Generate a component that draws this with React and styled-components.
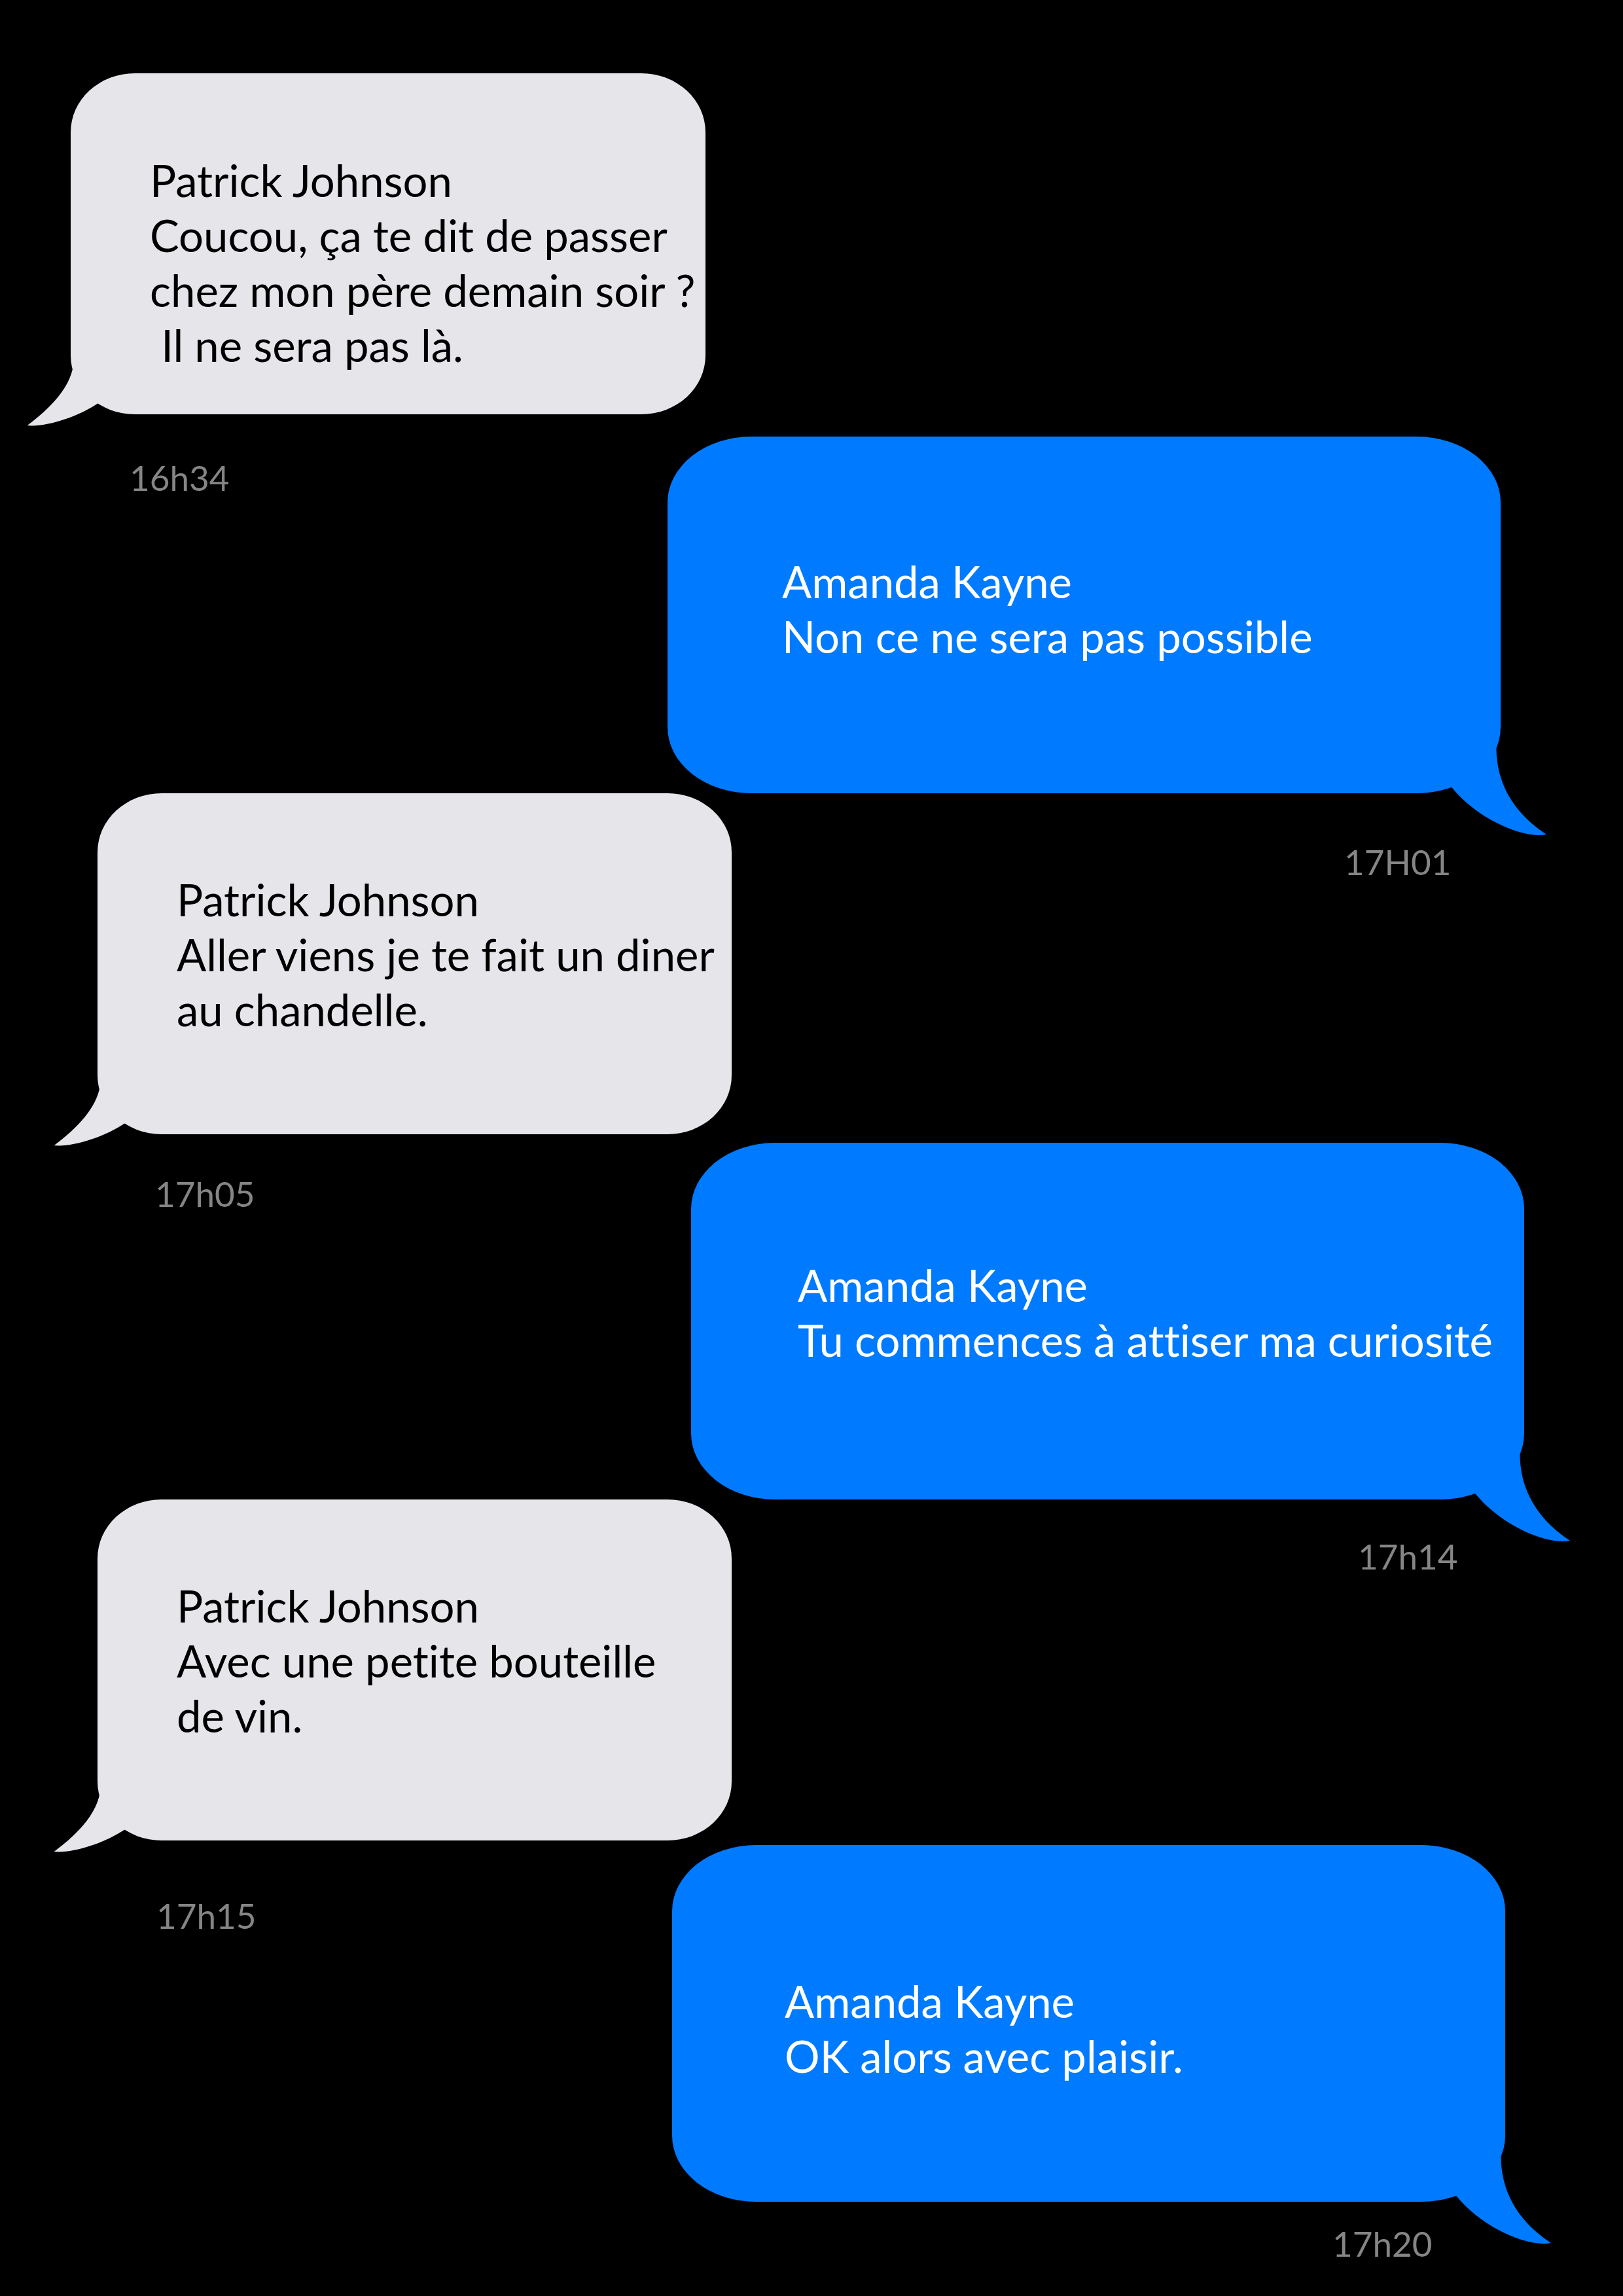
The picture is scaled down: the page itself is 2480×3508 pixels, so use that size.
import styled, { createGlobalStyle } from "styled-components";

// fond noir, pas de marge
const GlobalStyle = createGlobalStyle`
  body {
    margin: 0;
    background: #000;
  }
`;

// page entière
const Page = styled.div`
  width: 2480px;
  min-height: 3508px;
  box-sizing: border-box;
  padding-top: 112px;
  background: #000;
  display: flex;
  flex-direction: column;
  font-family: Lato, "Open Sans", sans-serif;
  font-variant-ligatures: none;
`;

// un message = bulle + heure
const Message = styled.div`
  display: flex;
  flex-direction: column;
  align-items: flex-start;
  margin-top: ${(p) => p.$mt}px;
`;

const Bubble = styled.div`
  position: relative;
  box-sizing: border-box;
  margin-left: ${(p) => p.$x}px;
  width: ${(p) => p.$w}px;
  height: ${(p) => p.$h}px;
  padding: ${(p) => p.$pt}px 0 0 ${(p) => p.$pl}px;
  background: ${(p) => (p.$out ? "#007aff" : "#e6e5ea")};
  color: ${(p) => (p.$out ? "#fff" : "#000")};
  border-radius: ${(p) => (p.$out ? "128px / 101px" : "98px / 90px")};
`;

const Text = styled.div`
  position: relative;
  z-index: 1;
  font-size: 67px;
  line-height: 84px;
  white-space: pre;
`;

// la queue de la bulle
const TailSvg = styled.svg`
  position: absolute;
  bottom: ${(p) => (p.$out ? -80 : -40)}px;
  ${(p) => (p.$out ? "right: -90px;" : "left: -80px;")}
  overflow: visible;
`;

const Time = styled.div`
  margin-left: ${(p) => p.$x}px;
  margin-top: ${(p) => p.$mt}px;
  font-size: 53px;
  line-height: 60px;
  color: #858585;
`;

function Tail({ out }) {
  if (out) {
    return (
      <TailSvg $out width="250" height="200" viewBox="0 0 250 200">
        <path
          fill="#007aff"
          d="M153.4 48 C153 105 180 150 230 183 C195 190 125 160 85 110.7 Q55 119 17 120 L0 120 L0 10 L150 10 Z"
        />
      </TailSvg>
    );
  }
  return (
    <TailSvg width="250" height="160" viewBox="0 0 250 160">
      <path
        fill="#e6e5ea"
        d="M83.7 47 C78 80 50 110 13.7 137 C40 140 90 125 123.7 102 Q145 118 190 120 L250 120 L250 10 L90 10 Z"
      />
    </TailSvg>
  );
}

const messages = [
  {
    out: false, x: 108, w: 970, h: 521, mt: 0, pt: 121, pl: 121,
    name: "Patrick Johnson",
    lines: ["Coucou, ça te dit de passer", "chez mon père demain soir ?", " Il ne sera pas là."],
    time: "16h34", tx: 198, tmt: 67,
  },
  {
    out: true, x: 1020, w: 1273, h: 545, mt: -93, pt: 179, pl: 175,
    name: "Amanda Kayne",
    lines: ["Non ce ne sera pas possible"],
    time: "17H01", tx: 2054, tmt: 75,
  },
  {
    out: false, x: 149, w: 969, h: 521, mt: -135, pt: 120, pl: 121,
    name: "Patrick Johnson",
    lines: ["Aller viens je te fait un diner", "au chandelle."],
    time: "17h05", tx: 237, tmt: 61,
  },
  {
    out: true, x: 1056, w: 1273, h: 545, mt: -108, pt: 175, pl: 163,
    name: "Amanda Kayne",
    lines: ["Tu commences à attiser ma curiosité"],
    time: "17h14", tx: 2075, tmt: 57,
  },
  {
    out: false, x: 149, w: 969, h: 521, mt: -117, pt: 120, pl: 121,
    name: "Patrick Johnson",
    lines: ["Avec une petite bouteille", "de vin."],
    time: "17h15", tx: 239, tmt: 85,
  },
  {
    out: true, x: 1027, w: 1273, h: 545, mt: -138, pt: 196, pl: 172,
    name: "Amanda Kayne",
    lines: ["OK alors avec plaisir."],
    time: "17h20", tx: 2036, tmt: 34,
  },
];

export default function App() {
  return (
    <>
      <GlobalStyle />
      <Page>
        {messages.map((m, i) => (
          <Message key={i} $mt={m.mt}>
            <Bubble $out={m.out} $x={m.x} $w={m.w} $h={m.h} $pt={m.pt} $pl={m.pl}>
              <Tail out={m.out} />
              <Text>{[m.name, ...m.lines].join("\n")}</Text>
            </Bubble>
            <Time $x={m.tx} $mt={m.tmt}>{m.time}</Time>
          </Message>
        ))}
      </Page>
    </>
  );
}
